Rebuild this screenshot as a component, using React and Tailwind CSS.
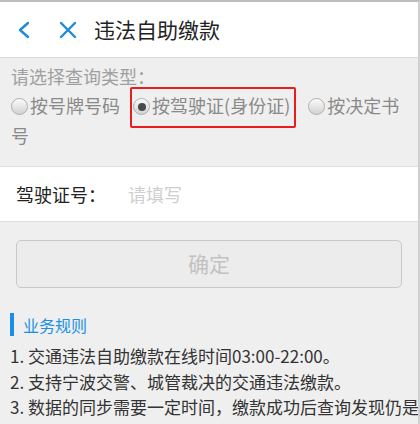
import React from 'react';

const font = { fontFamily: '"Noto Sans CJK SC", "Noto Sans", sans-serif' };

function Radio({ checked }) {
  return (
    <span className="relative inline-block shrink-0 w-[17px] h-[17px] min-w-[17px] rounded-full border border-[#b0b0b0] bg-linear-to-b from-[#fbfbfb] to-[#d2d2d2] align-[-2px] mr-[2px]">
      {checked && <span className="absolute left-[3.5px] top-[3.5px] w-[8px] h-[8px] rounded-full bg-[#4a4a4a]" />}
    </span>
  );
}

export default function App() {
  return (
    <div
      className="w-[420px] h-[424px] overflow-hidden bg-[#efefef] border-t-2 border-r-2 border-[#bdbdbd] border-r-[#cfcfcf]"
      style={font}
    >
      {/* header */}
      <div className="h-[56px] bg-white border-b border-[#d9d9d9] flex items-center">
        <svg className="ml-[17px]" width="13" height="18" viewBox="0 0 13 18" fill="none">
          <path d="M11 2 L3 9 L11 16" stroke="#1f8ad9" strokeWidth="2.4" strokeLinecap="round" strokeLinejoin="round" />
        </svg>
        <svg className="ml-[29px]" width="18" height="18" viewBox="0 0 18 18" fill="none">
          <path d="M2 2 L16 16 M16 2 L2 16" stroke="#1f8ad9" strokeWidth="2.4" strokeLinecap="round" />
        </svg>
        <span className="ml-[17px] text-[21px] text-[#222] leading-none">违法自助缴款</span>
      </div>

      {/* query type */}
      <div className="relative px-[11px] pt-[5px] pb-[16px]">
        <div className="text-[18px] leading-[27px] text-[#a0a0a0]">请选择查询类型：</div>
        <p className="text-[18px] leading-[30px] text-[#8a8a8a] pr-[6px]">
          <Radio />按号牌号码{' '}
          <span className="ml-[9px]"><Radio checked />按驾驶证(身份证)</span>{' '}
          <span className="ml-[14px]"><Radio />按决定书号</span>
        </p>
        <div className="absolute left-[130px] top-[29px] w-[166px] h-[41px] border-2 border-[#e81e1e] rounded-[2px]" />
      </div>

      {/* input row */}
      <div className="h-[56px] bg-white border-y border-[#dedede] flex items-center px-[16px]">
        <span className="text-[18px] text-[#222] w-[112px]">驾驶证号：</span>
        <span className="text-[18px] text-[#cfcfcf]">请填写</span>
      </div>

      {/* button */}
      <div className="px-[16px] pt-[18px]">
        <div className="h-[48px] rounded-[5px] border border-[#c9c9c9] bg-[#ececec] flex items-center justify-center text-[21px] text-[#c2c2c2]">
          确定
        </div>
      </div>

      {/* rules */}
      <div className="px-[10px] pt-[25px]">
        <div className="flex items-center h-[23px]">
          <span className="w-[4px] h-[23px] bg-[#1a8fe6]" />
          <span className="ml-[9px] text-[16px] text-[#1a8fe6]">业务规则</span>
        </div>
        <div className="mt-[7px] text-[17px] leading-[25.5px] text-[#333] whitespace-nowrap">
          <div>1. 交通违法自助缴款在线时间03:00-22:00。</div>
          <div>2. 支持宁波交警、城管裁决的交通违法缴款。</div>
          <div>3. 数据的同步需要一定时间，缴款成功后查询发现仍是</div>
        </div>
      </div>
    </div>
  );
}
